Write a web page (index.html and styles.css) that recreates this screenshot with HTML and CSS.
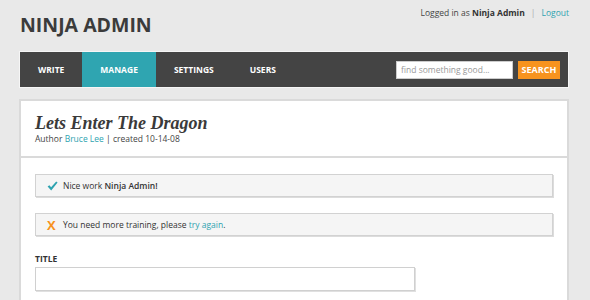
FILE: index.html
```html
<!DOCTYPE html>
<html>
<head>
<meta charset="utf-8">
<link rel="stylesheet" href="styles.css">
</head>
<body>
<div class="wrap">
  <header class="top">
    <h1 class="logo">NINJA ADMIN</h1>
    <div class="user">Logged in as <b>Ninja Admin</b><span class="sep">|</span><a href="#" class="link">Logout</a></div>
  </header>
  <nav class="nav">
    <ul class="tabs">
      <li class="tab">WRITE</li>
      <li class="tab active">MANAGE</li>
      <li class="tab">SETTINGS</li>
      <li class="tab">USERS</li>
    </ul>
    <form class="search">
      <input class="search-input" type="text" placeholder="find something good...">
      <button class="search-btn" type="button">SEARCH</button>
    </form>
  </nav>
  <main class="panel">
    <div class="panel-head">
      <h2 class="post-title">Lets Enter The Dragon</h2>
      <p class="meta">Author <a href="#" class="link">Bruce Lee</a> | created 10-14-08</p>
    </div>
    <div class="panel-body">
      <div class="alert">
        <span class="icon"><svg width="11" height="10" viewBox="0 0 11 10"><path d="M0.6 5.6 L2.4 4.2 L4.1 6.3 L9.2 0.4 L10.6 1.6 L4.2 9.4 Z" fill="#2ea3b0"/></svg></span>
        <span>Nice work <b>Ninja Admin!</b></span>
      </div>
      <div class="alert">
        <span class="icon icon-x">X</span>
        <span>You need more training, please <a href="#" class="link">try again</a>.</span>
      </div>
      <label class="label">TITLE</label>
      <input class="field" type="text">
    </div>
  </main>
</div>
</body>
</html>
```

FILE: styles.css
```css
* { box-sizing: border-box; }
html, body { margin: 0; padding: 0; }
body {
  background: #e9e9e9;
  font-family: "Open Sans", "DejaVu Sans", sans-serif;
  color: #3a3a3a;
  height: 300px;
  overflow: hidden;
}
.wrap {
  padding: 0 21px 0 19px;
}
.top {
  height: 51px;
  display: flex;
  justify-content: space-between;
  align-items: flex-start;
}
.logo {
  margin: 12px 0 0 1px;
  font-size: 19.5px;
  line-height: 26px;
  font-weight: 700;
  color: #3b3b3b;
}
.user {
  margin-top: 7px;
  font-size: 8.5px;
  line-height: 12px;
  color: #444;
}
.user b { font-weight: 700; color: #333; }
.sep { color: #aaa; margin: 0 6px; }
.link { color: #2ea3b0; text-decoration: none; }

.nav {
  height: 37px;
  background: #444;
  border: 1px solid #f6f6f6;
  display: flex;
  justify-content: space-between;
  align-items: center;
}
.tabs {
  list-style: none;
  margin: 0;
  padding: 0;
  display: flex;
  height: 100%;
}
.tab {
  display: flex;
  align-items: center;
  padding: 0 18px;
  color: #fff;
  font-size: 8.5px;
  font-weight: 700;
}
.tab.active { background: #2fa5b1; }
.search {
  display: flex;
  align-items: center;
  gap: 5px;
  margin-right: 8px;
}
.search-input {
  width: 117px;
  height: 18px;
  border: 1px solid #ccc;
  background: #fff;
  padding: 0 4px;
  font-family: "Open Sans", sans-serif;
  font-size: 8.5px;
  margin: 0;
}
.search-input::placeholder { color: #999; }
.search-btn {
  width: 42px;
  height: 18px;
  background: #f7931e;
  border: 0;
  color: #fff;
  font-family: "Open Sans", sans-serif;
  font-size: 9px;
  font-weight: 700;
  padding: 0;
  margin: 0;
}

.panel {
  margin-top: 11px;
  background: #fff;
  border: 2px solid #dadada;
  border-bottom: 0;
  height: 201px;
}
.panel-head {
  padding: 12px 14px 11px;
  border-bottom: 2px solid #dadada;
}
.post-title {
  margin: 0;
  font-family: "Liberation Serif", serif;
  font-style: italic;
  font-weight: 700;
  font-size: 18px;
  line-height: 20px;
  color: #3a3a3a;
}
.meta {
  margin: 0;
  font-size: 8.5px;
  line-height: 12px;
  color: #444;
}
.panel-body {
  padding: 16px 14px 0;
}
.alert {
  height: 23px;
  background: #f5f5f5;
  border: 1px solid #d2d2d2;
  box-shadow: 1px 1px 0 #dcdcdc;
  display: flex;
  align-items: center;
  padding-left: 11px;
  font-size: 8.5px;
  color: #333;
  margin-bottom: 16px;
}
.alert b { font-weight: 600; }
.icon {
  width: 11px;
  margin-right: 5px;
  display: flex;
  align-items: center;
}
.icon-x {
  color: #f7931e;
  font-weight: 700;
  font-size: 13px;
  line-height: 12px;
}
.label {
  display: block;
  margin-top: 17px;
  font-size: 8.5px;
  line-height: 12px;
  font-weight: 700;
  color: #333;
}
.field {
  display: block;
  margin-top: 2px;
  width: 380px;
  height: 24px;
  border: 1px solid #d0d0d0;
  box-shadow: 1px 1px 0 #e0e0e0;
  background: #fff;
}
```
